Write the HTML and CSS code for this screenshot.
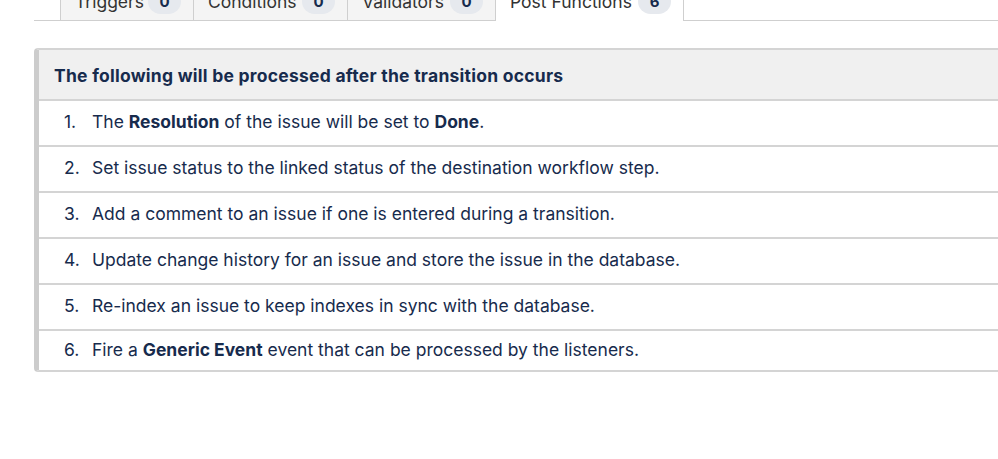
FILE: index.html
```html
<!DOCTYPE html>
<html>
<head>
<meta charset="utf-8">
<link rel="stylesheet" href="styles.css">
</head>
<body>
<div class="tabs">
  <div class="tab tab-triggers"><span class="tab-label">Triggers</span><span class="badge">0</span></div>
  <div class="tab tab-conditions"><span class="tab-label">Conditions</span><span class="badge">0</span></div>
  <div class="tab tab-validators"><span class="tab-label">Validators</span><span class="badge">0</span></div>
  <div class="tab tab-post active"><span class="tab-label">Post Functions</span><span class="badge">6</span></div>
  <div class="tab-fill"></div>
</div>
<div class="panel">
  <div class="panel-head">The following will be processed after the transition occurs</div>
  <ol class="items">
    <li class="item"><span class="num">1.</span><span>The <b>Resolution</b> of the issue will be set to <b>Done</b>.</span></li>
    <li class="item"><span class="num">2.</span><span>Set issue status to the linked status of the destination workflow step.</span></li>
    <li class="item"><span class="num">3.</span><span>Add a comment to an issue if one is entered during a transition.</span></li>
    <li class="item"><span class="num">4.</span><span>Update change history for an issue and store the issue in the database.</span></li>
    <li class="item"><span class="num">5.</span><span>Re-index an issue to keep indexes in sync with the database.</span></li>
    <li class="item last"><span class="num">6.</span><span>Fire a <b>Generic Event</b> event that can be processed by the listeners.</span></li>
  </ol>
</div>
</body>
</html>
```
FILE: styles.css
```css
html, body {
  margin: 0;
  padding: 0;
  background: #fff;
  overflow: hidden;
}
body {
  font-family: Inter, "Liberation Sans", sans-serif;
  color: #172b4d;
  font-size: 17.5px;
}
.tabs {
  display: flex;
  margin-top: -18px;
  margin-left: 34px;
  height: 39px;
  padding-left: 26px;
  border-bottom: 1px solid #cfcfcf;
  box-sizing: border-box;
}
.tab {
  display: flex;
  align-items: center;
  justify-content: space-between;
  padding: 0 12px 0 14px;
  background: #f4f4f4;
  border: 1px solid #cfcfcf;
  border-top: none;
  border-bottom: none;
  margin-right: -1px;
  color: #333;
  height: 38px;
  box-sizing: border-box;
  flex: none;
}
.tab-triggers { width: 134px; }
.tab-conditions { width: 155px; }
.tab-validators { width: 149px; }
.tab-post { width: 189px; }
.tab.active {
  background: #fff;
  height: 39px;
}
.tab-fill {
  flex: 1;
}
.badge {
  display: inline-flex;
  align-items: center;
  justify-content: center;
  min-width: 33px;
  height: 25px;
  border-radius: 12.5px;
  background: #e6e9ee;
  color: #172b4d;
  font-weight: 700;
  font-size: 15px;
}
.panel {
  margin: 27px -20px 0 34px;
  border-left: 5px solid #cccccc;
  border-top: 2px solid #d4d4d4;
  border-bottom: 2px solid #d4d4d4;
  border-radius: 4px 0 0 4px;
}
.panel-head {
  background: #f0f0f0;
  height: 51px;
  box-sizing: border-box;
  padding: 15px 0 0 15px;
  font-weight: 700;
  letter-spacing: 0.25px;
  border-bottom: 2px solid #d4d4d4;
}
.items {
  list-style: none;
  margin: 0;
  padding: 0;
}
.item {
  display: flex;
  height: 46px;
  box-sizing: border-box;
  padding: 10px 0 0 25px;
  border-bottom: 2px solid #d4d4d4;
}
.item.last {
  border-bottom: none;
  height: 39px;
  padding-top: 8px;
}
.num {
  width: 28px;
  flex: none;
}
b {
  font-weight: 700;
}
```
